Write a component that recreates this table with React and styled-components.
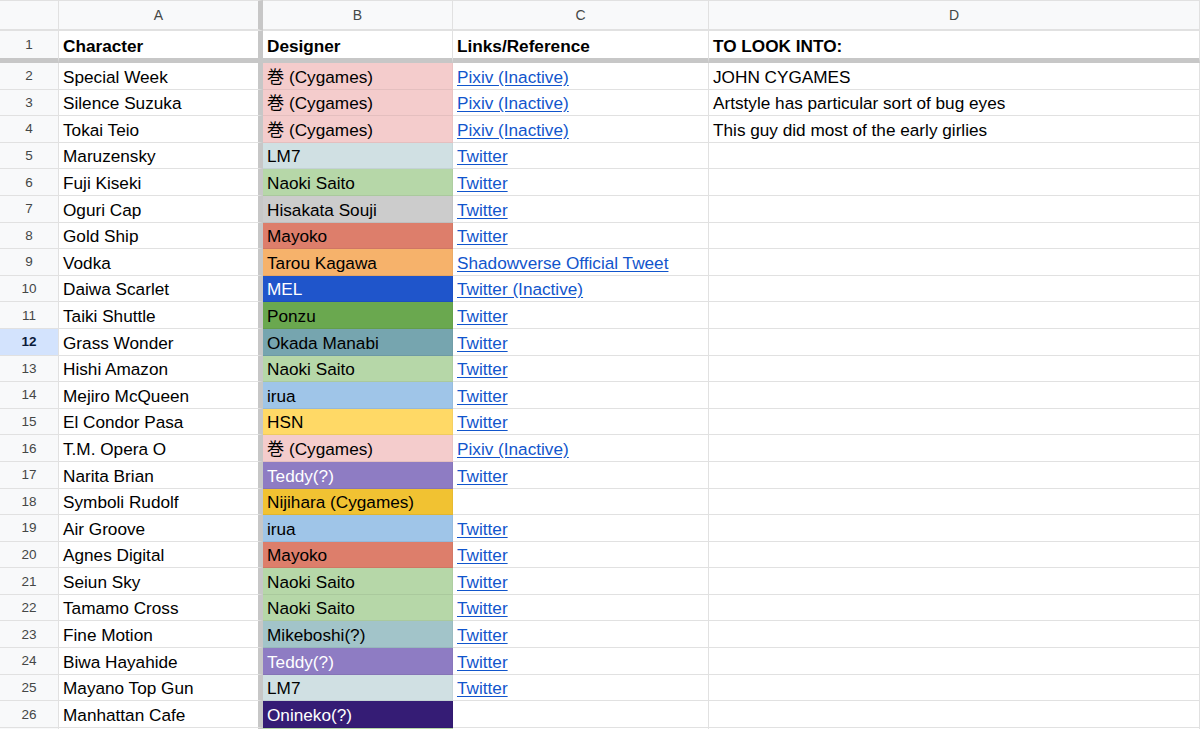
import React from 'react'
import styled, { createGlobalStyle } from 'styled-components'

const GlobalStyle = createGlobalStyle`
    html, body {
        margin: 0;
        padding: 0;
        background: #fff;
        overflow: hidden;
        height: 729px;
    }
    body {
        font-family: "Liberation Sans", Arial, "Noto Sans CJK JP", sans-serif;
    }
`

const COLS = '59px 204px 190px 256px 1fr'
const GRID = '#e1e1e1'
const FREEZE = '#c7c7c7'

const Sheet = styled.div`
    width: 1200px;
    height: 729px;
    overflow: hidden;
`

const Row = styled.div`
    display: grid;
    grid-template-columns: ${COLS};
    height: ${p => p.$h}px;
    box-sizing: border-box;
`

const HeadCell = styled.div`
    background: #f8f9fa;
    color: #444746;
    font-size: 14px;
    display: flex;
    align-items: center;
    justify-content: center;
    box-sizing: border-box;
    border-top: 1px solid ${GRID};
    border-bottom: 2px solid ${GRID};
    border-right: ${p => (p.$freeze ? `5px solid ${FREEZE}` : `1px solid ${GRID}`)};
`

const RowNum = styled.div`
    background: ${p => (p.$active ? '#d3e3fd' : '#f8f9fa')};
    color: ${p => (p.$active ? '#0b1b3a' : '#444746')};
    font-weight: ${p => (p.$active ? 700 : 400)};
    font-size: 13.5px;
    display: flex;
    align-items: center;
    justify-content: center;
    box-sizing: border-box;
    border-right: 1px solid ${GRID};
    border-bottom: ${p => (p.$freeze ? `5px solid ${FREEZE}` : `1px solid ${GRID}`)};
`

const Cell = styled.div`
    background: ${p => p.$bg || '#fff'};
    color: ${p => (p.$light ? '#fff' : '#000')};
    font-size: 17.2px;
    font-weight: ${p => (p.$bold ? 700 : 400)};
    display: flex;
    align-items: flex-end;
    padding: 0 4px 1px 4px;
    box-sizing: border-box;
    white-space: nowrap;
    overflow: hidden;
    border-right: ${p => (p.$freeze ? `5px solid ${FREEZE}` : `1px solid ${p.$bg ? 'rgba(0,0,0,0.04)' : GRID}`)};
    border-bottom: ${p => (p.$freezeRow ? `5px solid ${FREEZE}` : `1px solid ${p.$bg ? 'rgba(0,0,0,0.06)' : GRID}`)};
`

const Link = styled.a`
    color: #1155cc;
    text-decoration: underline;
    text-underline-offset: 2px;
`

const PINK = '#f4cccc'
const colors = {
    '巻 (Cygames)': [PINK],
    'LM7': ['#d0e0e3'],
    'Naoki Saito': ['#b6d7a8'],
    'Hisakata Souji': ['#cccccc'],
    'Mayoko': ['#dd7e6b'],
    'Tarou Kagawa': ['#f6b26b'],
    'MEL': ['#1f55cb', true],
    'Ponzu': ['#6aa84f'],
    'Okada Manabi': ['#76a5af'],
    'irua': ['#9fc5e8'],
    'HSN': ['#ffd966'],
    'Teddy(?)': ['#8e7cc3', true],
    'Nijihara (Cygames)': ['#f1c232'],
    'Mikeboshi(?)': ['#a2c4c9'],
    'Onineko(?)': ['#351c75', true],
}

const rows = [
    ['Special Week', '巻 (Cygames)', 'Pixiv (Inactive)', 'JOHN CYGAMES'],
    ['Silence Suzuka', '巻 (Cygames)', 'Pixiv (Inactive)', 'Artstyle has particular sort of bug eyes'],
    ['Tokai Teio', '巻 (Cygames)', 'Pixiv (Inactive)', 'This guy did most of the early girlies'],
    ['Maruzensky', 'LM7', 'Twitter'],
    ['Fuji Kiseki', 'Naoki Saito', 'Twitter'],
    ['Oguri Cap', 'Hisakata Souji', 'Twitter'],
    ['Gold Ship', 'Mayoko', 'Twitter'],
    ['Vodka', 'Tarou Kagawa', 'Shadowverse Official Tweet'],
    ['Daiwa Scarlet', 'MEL', 'Twitter (Inactive)'],
    ['Taiki Shuttle', 'Ponzu', 'Twitter'],
    ['Grass Wonder', 'Okada Manabi', 'Twitter'],
    ['Hishi Amazon', 'Naoki Saito', 'Twitter'],
    ['Mejiro McQueen', 'irua', 'Twitter'],
    ['El Condor Pasa', 'HSN', 'Twitter'],
    ['T.M. Opera O', '巻 (Cygames)', 'Pixiv (Inactive)'],
    ['Narita Brian', 'Teddy(?)', 'Twitter'],
    ['Symboli Rudolf', 'Nijihara (Cygames)', ''],
    ['Air Groove', 'irua', 'Twitter'],
    ['Agnes Digital', 'Mayoko', 'Twitter'],
    ['Seiun Sky', 'Naoki Saito', 'Twitter'],
    ['Tamamo Cross', 'Naoki Saito', 'Twitter'],
    ['Fine Motion', 'Mikeboshi(?)', 'Twitter'],
    ['Biwa Hayahide', 'Teddy(?)', 'Twitter'],
    ['Mayano Top Gun', 'LM7', 'Twitter'],
    ['Manhattan Cafe', 'Onineko(?)', ''],
]

const App = () => {
    return (
        <Sheet>
            <GlobalStyle />
            <Row $h={31}>
                <HeadCell />
                <HeadCell $freeze>A</HeadCell>
                <HeadCell>B</HeadCell>
                <HeadCell>C</HeadCell>
                <HeadCell>D</HeadCell>
            </Row>
            <Row $h={32}>
                <RowNum $freeze>1</RowNum>
                <Cell $bold $freeze $freezeRow>Character</Cell>
                <Cell $bold $freezeRow>Designer</Cell>
                <Cell $bold $freezeRow>Links/Reference</Cell>
                <Cell $bold $freezeRow>TO LOOK INTO:</Cell>
            </Row>
            {rows.map((r, i) => {
                const n = i + 2
                const [bg, light] = colors[r[1]] || []
                return (
                    <Row key={n} $h={26.6}>
                        <RowNum $active={n === 12}>{n}</RowNum>
                        <Cell $freeze>{r[0]}</Cell>
                        <Cell $bg={bg} $light={light}>{r[1]}</Cell>
                        <Cell>{r[2] && <Link href="#">{r[2]}</Link>}</Cell>
                        <Cell>{r[3]}</Cell>
                    </Row>
                )
            })}
            {/* next row is only a sliver at the bottom edge */}
            <Row $h={26.6}>
                <RowNum />
                <Cell $freeze />
                <Cell $bg="#b6d7a8" />
                <Cell />
                <Cell />
            </Row>
        </Sheet>
    )
}

export default App
